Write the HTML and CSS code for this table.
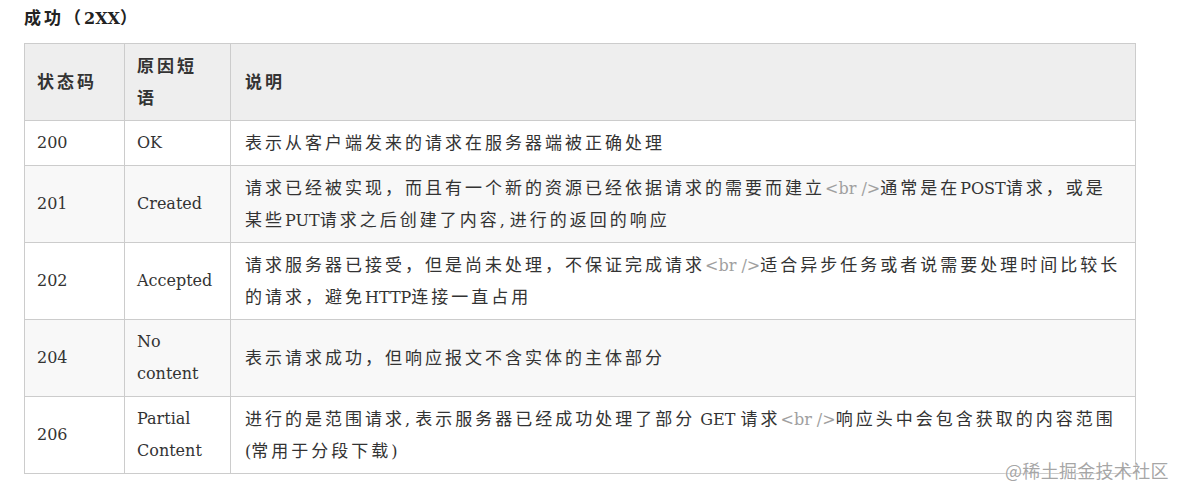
FILE: index.html
```html
<!DOCTYPE html>
<html lang="zh-CN">
<head>
<meta charset="utf-8">
<title>成功（2XX）</title>
<link rel="stylesheet" href="styles.css">
</head>
<body>
<div class="page">
  <h4 class="title">成功（<span class="en">2XX</span>）</h4>
  <table class="codes">
    <colgroup>
      <col class="c-code">
      <col class="c-reason">
      <col class="c-desc">
    </colgroup>
    <thead>
      <tr>
        <th class="zh">状态码</th>
        <th class="zh reason">原因短语</th>
        <th class="zh desc">说明</th>
      </tr>
    </thead>
    <tbody>
      <tr>
        <td>200</td>
        <td class="reason">OK</td>
        <td class="zh desc">表示从客户端发来的请求在服务器端被正确处理</td>
      </tr>
      <tr class="alt">
        <td>201</td>
        <td class="reason">Created</td>
        <td class="zh desc">请求已经被实现，而且有一个新的资源已经依据请求的需要而建立<span class="en tag">&lt;br /&gt;</span>通常是在<span class="en">POST</span>请求，或是某些<span class="en">PUT</span>请求之后创建了内容<span class="en">, </span>进行的返回的响应</td>
      </tr>
      <tr>
        <td>202</td>
        <td class="reason">Accepted</td>
        <td class="zh desc">请求服务器已接受，但是尚未处理，不保证完成请求<span class="en tag">&lt;br /&gt;</span>适合异步任务或者说需要处理时间比较长的请求，避免<span class="en">HTTP</span>连接一直占用</td>
      </tr>
      <tr class="alt">
        <td>204</td>
        <td class="reason">No content</td>
        <td class="zh desc">表示请求成功，但响应报文不含实体的主体部分</td>
      </tr>
      <tr>
        <td>206</td>
        <td class="reason">Partial Content</td>
        <td class="zh desc">进行的是范围请求<span class="en">, </span>表示服务器已经成功处理了部分<span class="en"> GET </span>请求<span class="en tag">&lt;br /&gt;</span>响应头中会包含获取的内容范围<span class="en">(</span>常用于分段下载<span class="en">)</span></td>
      </tr>
    </tbody>
  </table>
  <div class="watermark">@稀土掘金技术社区</div>
</div>
</body>
</html>
```

FILE: styles.css
```css
html, body {
  margin: 0;
  padding: 0;
  background: #ffffff;
}

body {
  font-family: "DejaVu Serif", "Noto Sans CJK SC", serif;
  font-size: 16px;
  color: #333333;
}

.page {
  position: relative;
  padding: 2px 24px 0 24px;
  width: 1112px;
  height: 498px;
}

.title {
  margin: 0 0 9px 0;
  font-size: 17px;
  line-height: 32px;
  font-weight: bold;
  letter-spacing: 3px;
  color: #222222;
}

.title .en {
  font-size: 16px;
  line-height: 20px;
  letter-spacing: 0;
}

.codes {
  width: 1112px;
  border-collapse: collapse;
  table-layout: fixed;
}

.c-code { width: 100px; }
.c-reason { width: 106px; }

.codes th,
.codes td {
  border: 1px solid #cccccc;
  padding: 6px 12px;
  line-height: 32px;
  text-align: left;
  vertical-align: middle;
}

.codes th {
  background: #eeeeee;
  font-weight: bold;
  color: #333333;
}

.codes .zh {
  font-size: 17px;
  letter-spacing: 3px;
}

.codes .reason {
  padding-right: 16px;
}

.codes .desc {
  padding-left: 14px;
  padding-right: 13px;
}

.codes .en {
  font-size: 16px;
  line-height: 20px;
  letter-spacing: 0;
}

.codes .tag {
  color: #a0a0a0;
}

.codes tr.alt td {
  background: #f8f8f8;
}

.watermark {
  position: absolute;
  left: 1005px;
  top: 458px;
  white-space: nowrap;
  font-family: "Noto Sans CJK SC", sans-serif;
  font-size: 18px;
  line-height: 24px;
  letter-spacing: 0.3px;
  color: rgba(150, 150, 150, 0.85);
  text-shadow: 0 0 2px #ffffff;
}
```
